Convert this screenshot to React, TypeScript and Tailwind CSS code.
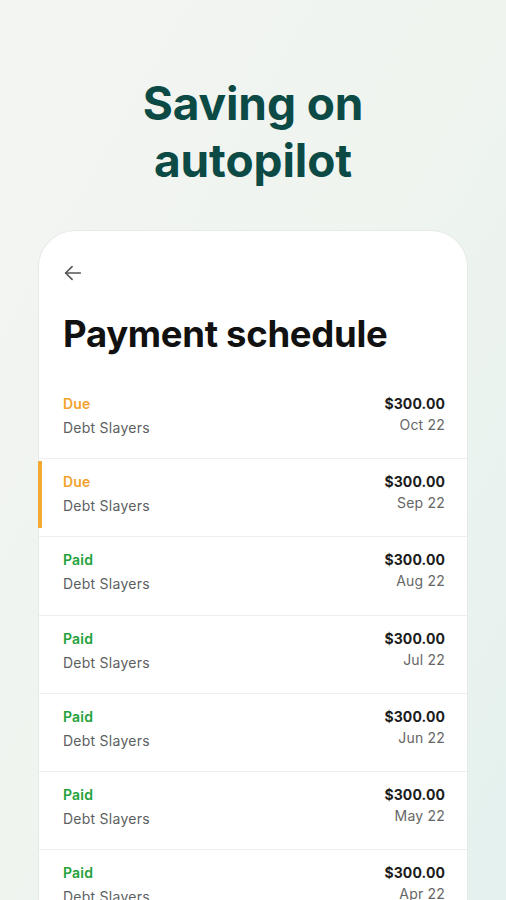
import React from 'react';

interface Payment {
  status: 'Due' | 'Paid';
  amount: string;
  date: string;
  current?: boolean;
}

const payments: Payment[] = [
  { status: 'Due', amount: '$300.00', date: 'Oct 22' },
  { status: 'Due', amount: '$300.00', date: 'Sep 22', current: true },
  { status: 'Paid', amount: '$300.00', date: 'Aug 22' },
  { status: 'Paid', amount: '$300.00', date: 'Jul 22' },
  { status: 'Paid', amount: '$300.00', date: 'Jun 22' },
  { status: 'Paid', amount: '$300.00', date: 'May 22' },
  { status: 'Paid', amount: '$300.00', date: 'Apr 22' },
];

function App() {
  return (
    <div
      className="h-[900px] w-full overflow-hidden bg-gradient-to-br from-[#f3f5f2] via-[#eff4ef] to-[#e4f1ee]"
      style={{ fontFamily: 'Inter, "Noto Sans", sans-serif' }}
    >
      {/* Headline */}
      <h1 className="pt-[75px] text-center text-[46px] font-bold leading-[57px] tracking-[-0.1px] text-[#0c4a46]">
        Saving on
        <br />
        autopilot
      </h1>

      {/* Phone card */}
      <div className="mx-[39px] mt-[42px] h-[700px] rounded-t-[36px] bg-white shadow-[0_0_0_1px_#e6ebe8]">
        <div className="px-[23px] pt-[31px]">
          <svg width="22" height="22" viewBox="0 0 24 24" fill="none" stroke="#555" strokeWidth="1.8" strokeLinecap="round" strokeLinejoin="round">
            <path d="M20 12H4" />
            <path d="M11 5l-7 7 7 7" />
          </svg>
        </div>
        <h2 className="mt-[29px] px-[24px] text-[36.5px] font-bold leading-[42px] tracking-[-0.3px] text-[#111]">
          Payment schedule
        </h2>

        <div className="mt-[26px]">
          {payments.map((p, i) => (
            <div
              key={i}
              className="relative flex h-[78.2px] items-start justify-between border-b border-[#eeeeee] pl-[24px] pr-[22px] pt-[14px]"
            >
              {p.current && <div className="absolute -left-px top-[2px] h-[67px] w-[4px] bg-[#f4a932]" />}
              <div>
                <p
                  className={`text-[14px] font-semibold leading-[18px] tracking-[0.2px] ${
                    p.status === 'Due' ? 'text-[#f2a22c]' : 'text-[#23a23a]'
                  }`}
                >
                  {p.status}
                </p>
                <p className="mt-[6px] text-[14px] leading-[18px] tracking-[0.25px] text-[#5c5f62]">Debt Slayers</p>
              </div>
              <div className="text-right">
                <p className="text-[14px] font-bold leading-[18px] tracking-[0.1px] text-[#1c1c1c]">{p.amount}</p>
                <p className="mt-[3px] text-[14px] leading-[18px] tracking-[0.2px] text-[#666]">{p.date}</p>
              </div>
            </div>
          ))}
        </div>
      </div>
    </div>
  );
}

export default App;
